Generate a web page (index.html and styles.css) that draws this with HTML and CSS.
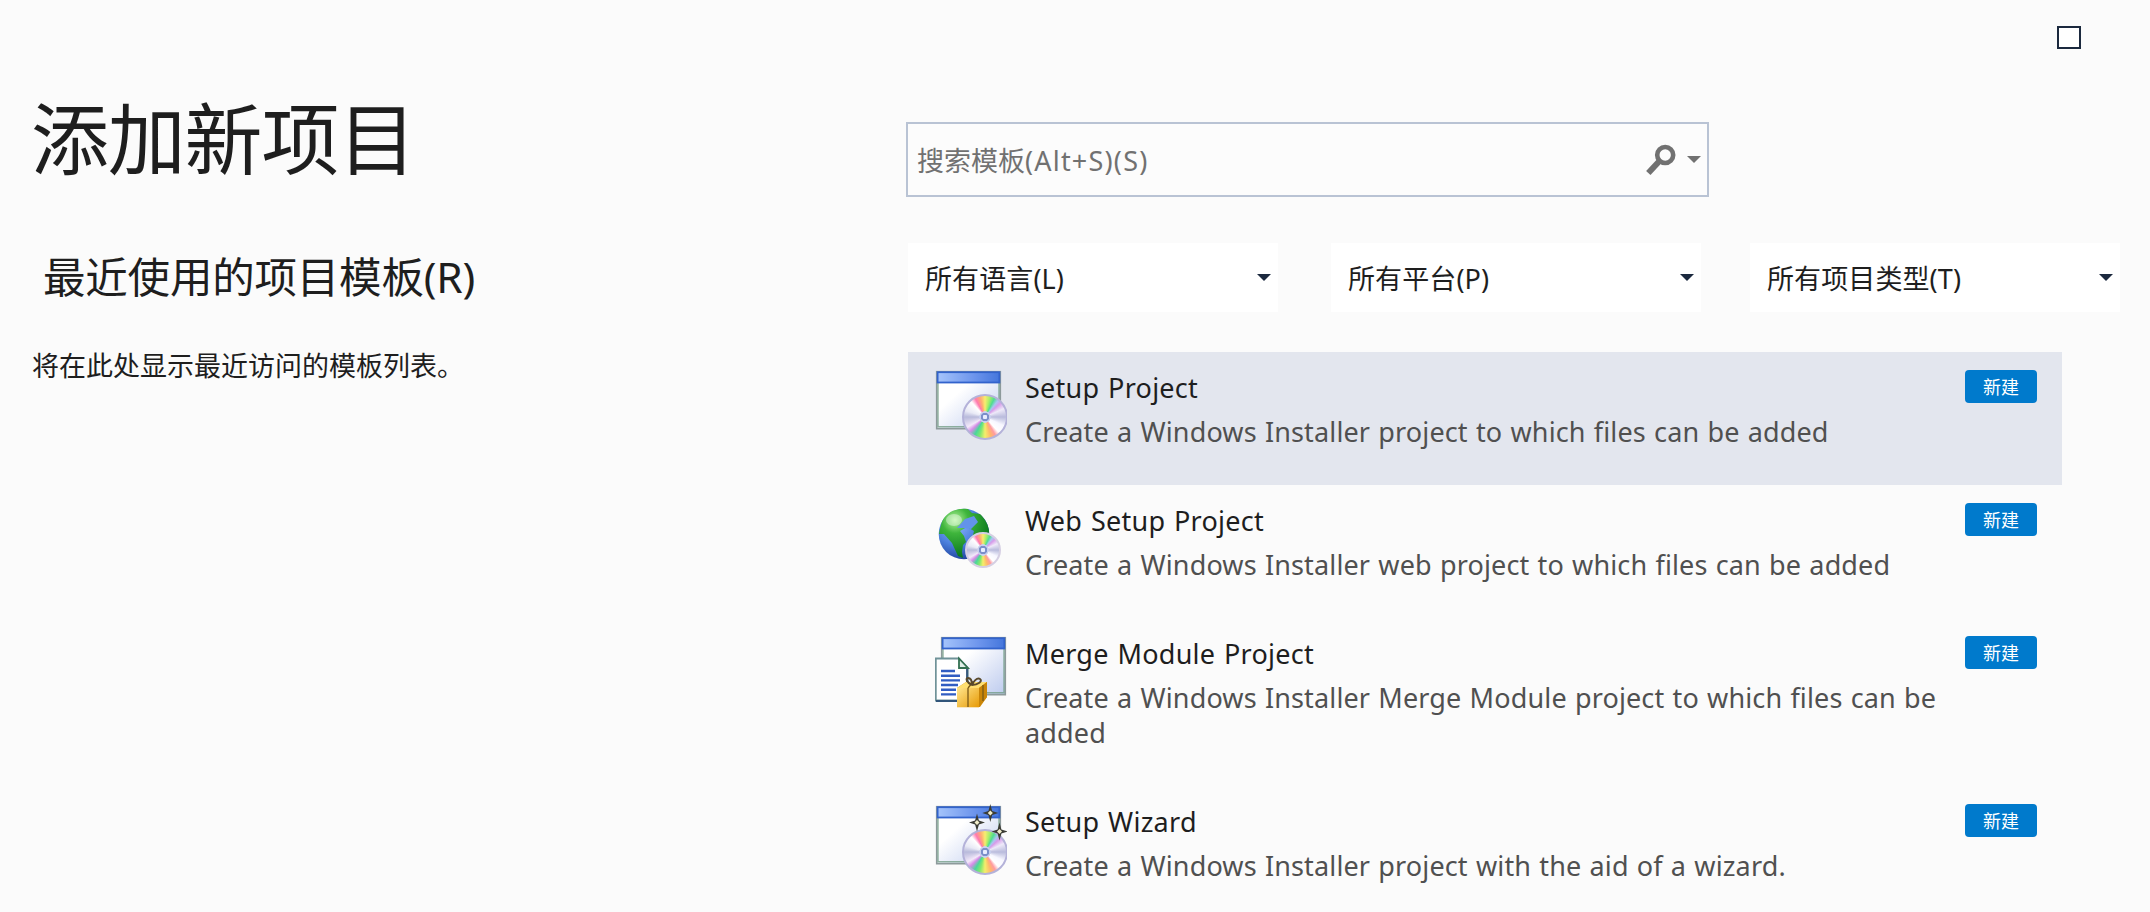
FILE: index.html
```html
<!DOCTYPE html>
<html lang="zh-CN">
<head>
<meta charset="utf-8">
<title>添加新项目</title>
<link rel="stylesheet" href="styles.css">
</head>
<body>
<svg class="defs" aria-hidden="true">
  <defs>
    <linearGradient id="bar" x1="0" x2="1"><stop offset="0" stop-color="#a5c4fb"/><stop offset=".6" stop-color="#6c94ec"/><stop offset="1" stop-color="#4476dc"/></linearGradient>
    <linearGradient id="pane" x1="0" y1="0" x2="1" y2="1"><stop offset=".35" stop-color="#fff"/><stop offset="1" stop-color="#bccaee"/></linearGradient>
    <radialGradient id="globe" cx=".35" cy=".3" r=".75"><stop offset="0" stop-color="#8fb8ff"/><stop offset=".55" stop-color="#4c80dd"/><stop offset="1" stop-color="#1c3f9a"/></radialGradient>
    <radialGradient id="land" gradientUnits="userSpaceOnUse" cx="20" cy="18" r="38"><stop offset="0" stop-color="#b4f59c"/><stop offset=".35" stop-color="#3fb53c"/><stop offset="1" stop-color="#08751d"/></radialGradient>
    <linearGradient id="gold" x1="0" y1="0" x2="1" y2="1"><stop offset="0" stop-color="#ffe58c"/><stop offset="1" stop-color="#e79a06"/></linearGradient>
    <g id="window">
      <rect x="1.7" y="2.7" width="63.6" height="57" fill="url(#pane)" stroke="#8d9a9b" stroke-width="1.6"/>
      <path d="M3 14v43.8h61V14" fill="none" stroke="#6e9a80" stroke-width="1.4" opacity=".75"/>
      <rect x="2.6" y="3.2" width="61.8" height="10.3" fill="url(#bar)" stroke="#3263cc" stroke-width="1.8"/>
    </g>
    <g id="spark"><path d="M0-9 1.9-1.9 8 0 1.9 1.9 0 9-1.9 1.9-8 0-1.9-1.9Z" fill="#3b3c35"/><path d="M0-2.5 2.5 0 0 2.5-2.5 0Z" fill="#f2eecb"/></g>
  </defs>
</svg>
<div class="dialog">
  <div class="titlebar"><button class="maximize" aria-label="最大化"></button></div>
  <main class="content">
    <section class="recent">
      <h1 class="heading">添加新项目</h1>
      <h2 class="subheading">最近使用的项目模板(R)</h2>
      <p class="hint">将在此处显示最近访问的模板列表。</p>
    </section>
    <section class="templates">
      <div class="search">
        <span class="placeholder">搜索模板<span class="latin">(Alt+S)(S)</span></span>
        <svg class="magnifier" viewBox="0 0 30 32"><circle cx="19.2" cy="11" r="8" fill="none" stroke="#717171" stroke-width="4.6"/><path d="M13.5 17 2.3 29" stroke="#717171" stroke-width="6"/></svg>
        <svg class="caret muted" viewBox="0 0 14 7"><path d="M0 0h14L7 7Z"/></svg>
      </div>
      <div class="filters">
        <div class="filter"><span>所有语言(L)</span><svg class="caret" viewBox="0 0 14 7"><path d="M0 0h14L7 7Z"/></svg></div>
        <div class="filter"><span>所有平台(P)</span><svg class="caret" viewBox="0 0 14 7"><path d="M0 0h14L7 7Z"/></svg></div>
        <div class="filter last"><span>所有项目类型(T)</span><svg class="caret" viewBox="0 0 14 7"><path d="M0 0h14L7 7Z"/></svg></div>
      </div>
      <ul class="list">
        <li class="item selected">
          <div class="icon"><svg viewBox="0 0 72 73"><use href="#window"/></svg><span class="disc"></span></div>
          <div class="text"><h3 class="name">Setup Project</h3><p class="desc">Create a Windows Installer project to which files can be added</p></div>
          <span class="badge">新建</span>
        </li>
        <li class="item">
          <div class="icon"><svg viewBox="0 0 72 73"><circle cx="29" cy="32" r="25.3" fill="url(#globe)"/><path d="M9 16C15 8 24 6 33 7l4 4 8 1c4 4 8 9 9 17l-2 11-8 4-7-7 2-8-7-4-7 4 4 5 2 6-3 3-1 7 1 6-5-2-6-13-8-9-5 0C5 27 6 20 9 16Z" fill="url(#land)"/><path d="M22 26l8-9 9-3 4 6-7 7-8-1Z" fill="#6393ea"/><ellipse cx="19" cy="18" rx="8" ry="6" fill="#fff" opacity=".4"/></svg><span class="disc small"></span></div>
          <div class="text"><h3 class="name">Web Setup Project</h3><p class="desc">Create a Windows Installer web project to which files can be added</p></div>
          <span class="badge">新建</span>
        </li>
        <li class="item tall">
          <div class="icon"><svg viewBox="0 0 72 73"><use href="#window" x="5"/>
            <path d="M.8 23.5h23l9 9.500V65.500H.8Z" fill="#fff" stroke="#6f9298" stroke-width="1.8"/><path d="M1 66h31V34" fill="none" stroke="#31557a" stroke-width="1.8"/>
            <path d="M24 23.500V33h9Z" fill="#dfeee7" stroke="#337052" stroke-width="1.8"/>
            <path d="M6 36h14M6 40.700h19M6 45.400h19M6 50h17M6 54.700h15M6 59.400h15" stroke="#315dc2" stroke-width="2.4"/>
            <path d="M22 53 31 47h21v15l-7 10H22Z" fill="#d18d0c"/><path d="M22 53h22v19.300H22Z" fill="url(#gold)"/><path d="M22 53 31 47h21l-8 6Z" fill="#ffdf71"/><path d="M44 53l8-6v15l-8 10Z" fill="#c98508"/>
            <path d="M33 53v19M33 53l5-6M48 50v16" stroke="#7b5a16" stroke-width="1.3" fill="none"/>
            <path d="M37 50c-5-2-7-7-4-7s4 4 4 7c1-3 5-8 8-6s-2 6-8 6" stroke="#59492b" stroke-width="2" fill="none"/></svg></div>
          <div class="text"><h3 class="name">Merge Module Project</h3><p class="desc">Create a Windows Installer Merge Module project to which files can be added</p></div>
          <span class="badge">新建</span>
        </li>
        <li class="item wizard">
          <div class="icon"><svg viewBox="0 0 72 73"><use href="#window"/></svg><span class="disc"></span><svg class="sparks" viewBox="0 0 72 73"><use href="#spark" x="42" y="18.500"/><use href="#spark" x="55.300" y="9"/><use href="#spark" x="64.500" y="27.500"/></svg></div>
          <div class="text"><h3 class="name">Setup Wizard</h3><p class="desc">Create a Windows Installer project with the aid of a wizard.</p></div>
          <span class="badge">新建</span>
        </li>
      </ul>
    </section>
  </main>
</div>
</body>
</html>
```
FILE: styles.css
```css
* { box-sizing: border-box; }
body { margin: 0; background: #fbfbfb; color: #1e1e1e; font-family: "Noto Sans", "Noto Sans CJK SC", sans-serif; }
h1, h2, h3, p, ul { margin: 0; padding: 0; font-weight: 400; }
.defs { position: absolute; width: 0; height: 0; }
.dialog { width: 2150px; height: 912px; overflow: hidden; }
.titlebar { display: flex; justify-content: flex-end; height: 82px; padding: 26px 69px 0 0; }
.maximize { width: 24px; height: 23px; padding: 0; border: 2px solid #1b293e; background: #fff; }
.content { display: flex; }
.recent { width: 906px; padding-left: 32px; }
.heading { margin: 7px 0 0 -1px; font-size: 78px; line-height: 100px; letter-spacing: -1.200px; }
.subheading { margin: 58px 0 0 11px; font-size: 42.500px; line-height: 60px; letter-spacing: -.2px; }
.hint { margin-top: 39px; font-size: 27px; line-height: 40px; }
.templates { width: 1244px; padding-top: 40px; }
.search { display: flex; align-items: center; width: 803px; height: 75px; padding: 0 6px 0 9px; border: 2px solid #b9c3d4; background: #fcfcfc; color: #717171; font-size: 27px; }
.placeholder { flex: 1; }
.latin { letter-spacing: 1.200px; }
.magnifier { width: 30px; height: 32px; margin-right: 11px; }
.caret { display: block; width: 14px; height: 7px; fill: #1b293e; }
.caret.muted { fill: #717171; }
.filters { display: flex; gap: 53px; margin: 46px 0 0 2px; }
.filter { display: flex; align-items: center; justify-content: space-between; width: 370px; height: 69px; padding: 0 7px 0 17px; background: #fff; font-size: 27px; letter-spacing: .1px; }
.filter.last { margin-left: -4px; }
.list { width: 1154px; margin: 40px 0 0 2px; list-style: none; }
.item { display: flex; align-items: flex-start; height: 133px; padding: 17px 25px 0 27px; }
.item.tall { height: 168px; }
.selected { background: #e3e6ee; }
.icon { position: relative; width: 72px; height: 73px; flex: none; overflow: hidden; filter: blur(.45px); }
.wizard .icon { margin-top: 1px; }
.icon svg { display: block; width: 72px; height: 73px; }
.icon .sparks { position: absolute; left: 0; top: 0; }
.disc { position: absolute; left: 27px; top: 25px; width: 46px; height: 46px; border-radius: 50%; border: 2px solid #b4b2d9;
  background: radial-gradient(circle, #e8edff 0 2px, #7c8fca 2.500px 4px, #c9d0ee 4.500px 5.500px, transparent 6px),
  conic-gradient(#f8ec70 0deg, #a8ee68 14deg, #4fdc92 27deg, #a6c8f0 38deg, #d79be9 48deg, #eeeaf9 66deg, #b9bbdc 90deg, #f7f7ff 115deg, #fff 138deg, #ff9ba0 150deg, #ffb86a 163deg, #f4ee6c 180deg, #84e86f 195deg, #48d79a 210deg, #d68be8 226deg, #f3e9fa 240deg, #b8badb 270deg, #e9eaf6 288deg, #fff 318deg, #ff79b0 332deg, #ffad72 347deg, #f8ec70 360deg); }
.disc.small { left: 30px; top: 30px; width: 36px; height: 36px; border-color: #d5cfe3; }
.text { width: 925px; margin: 1px 0 0 18px; flex: none; }
.name { font-size: 27px; line-height: 35px; letter-spacing: .25px; word-spacing: 1.500px; }
.desc { margin-top: 9px; font-size: 27px; line-height: 35px; letter-spacing: .14px; word-spacing: 1px; color: #505050; }
.badge { flex: none; width: 72px; height: 33px; margin: 1px 0 0 auto; border-radius: 4px; background: #007acc; color: #fff; font-size: 18px; line-height: 34px; text-align: center; }
```
